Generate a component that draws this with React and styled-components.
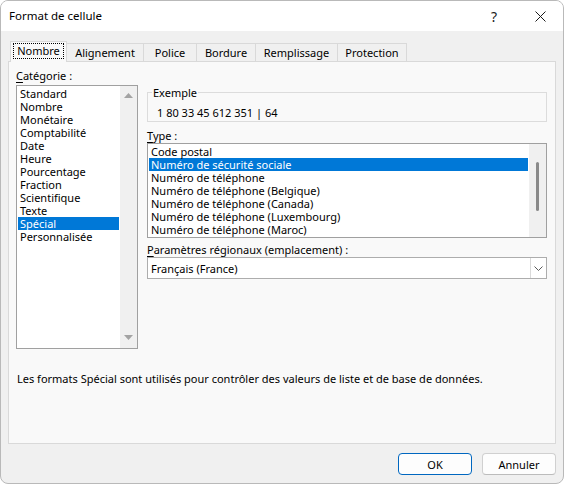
import React from "react";
import styled, { createGlobalStyle } from "styled-components";

const GlobalStyle = createGlobalStyle`
  html, body {
    margin: 0;
    padding: 0;
    background: #ffffff;
  }
  body {
    font-family: "Noto Sans", "Open Sans", sans-serif;
    font-size: 11px;
    color: #000000;
  }
  * {
    box-sizing: border-box;
  }
`;

const tabs = [
  { label: "Nombre", width: 57 },
  { label: "Alignement", width: 78 },
  { label: "Police", width: 54 },
  { label: "Bordure", width: 60 },
  { label: "Remplissage", width: 83 },
  { label: "Protection", width: 70 },
];

const categories = [
  "Standard",
  "Nombre",
  "Monétaire",
  "Comptabilité",
  "Date",
  "Heure",
  "Pourcentage",
  "Fraction",
  "Scientifique",
  "Texte",
  "Spécial",
  "Personnalisée",
];

const types = [
  "Code postal",
  "Numéro de sécurité sociale",
  "Numéro de téléphone",
  "Numéro de téléphone (Belgique)",
  "Numéro de téléphone (Canada)",
  "Numéro de téléphone (Luxembourg)",
  "Numéro de téléphone (Maroc)",
];

function App() {
  return (
    <>
      <GlobalStyle />
      <Window>
        <TitleBar>
          <Title>Format de cellule</Title>
          <CaptionButton>?</CaptionButton>
          <CaptionButton>
            <svg width="11" height="11" viewBox="0 0 11 11">
              <path d="M0.5 0.5 L10.5 10.5 M10.5 0.5 L0.5 10.5" stroke="#1a1a1a" strokeWidth="1" fill="none" />
            </svg>
          </CaptionButton>
        </TitleBar>

        <Body>
          <TabRow>
            {tabs.map((t, i) => (
              <Tab key={t.label} width={t.width} $active={i === 0}>
                {i === 0 ? <FocusLabel>{t.label}</FocusLabel> : t.label}
              </Tab>
            ))}
          </TabRow>

          <Panel>
            <Columns>
              <LeftColumn>
                <Label>
                  <u>C</u>atégorie :
                </Label>
                <ListBox $height={264}>
                  <ListItems>
                    {categories.map((c) => (
                      <Row key={c} $selected={c === "Spécial"}>
                        {c}
                      </Row>
                    ))}
                  </ListItems>
                  <ArrowTrack>
                    <svg width="9" height="5" viewBox="0 0 9 5">
                      <polygon points="0,5 4.5,0 9,5" fill="#a3a3a3" />
                    </svg>
                    <svg width="9" height="5" viewBox="0 0 9 5">
                      <polygon points="0,0 9,0 4.5,5" fill="#a3a3a3" />
                    </svg>
                  </ArrowTrack>
                </ListBox>
              </LeftColumn>

              <RightColumn>
                <Group>
                  <Legend>Exemple</Legend>
                  <SampleValue>1 80 33 45 612 351 | 64</SampleValue>
                </Group>

                <Label $top={6}>
                  <u>T</u>ype :
                </Label>
                <ListBox $height={95}>
                  <ListItems>
                    {types.map((t) => (
                      <Row key={t} $selected={t === "Numéro de sécurité sociale"}>
                        {t}
                      </Row>
                    ))}
                  </ListItems>
                  <ThinTrack>
                    <Thumb />
                  </ThinTrack>
                </ListBox>

                <Label $top={4}>
                  <u>P</u>aramètres régionaux (emplacement) :
                </Label>
                <Select>
                  <SelectValue>Français (France)</SelectValue>
                  <DropButton>
                    <svg width="9" height="5" viewBox="0 0 9 5">
                      <path d="M0.5 0.5 L4.5 4.5 L8.5 0.5" stroke="#5a5a5a" strokeWidth="1" fill="none" />
                    </svg>
                  </DropButton>
                </Select>
              </RightColumn>
            </Columns>

            <Description>
              Les formats Spécial sont utilisés pour contrôler des valeurs de liste et de base de données.
            </Description>
          </Panel>

          <Footer>
            <Button $primary>OK</Button>
            <Button>Annuler</Button>
          </Footer>
        </Body>
      </Window>
    </>
  );
}

export default App;

const Window = styled.div`
  width: 564px;
  height: 484px;
  border: 1px solid #b9b9b9;
  border-radius: 8px;
  overflow: hidden;
  display: flex;
  flex-direction: column;
  background: #f0f0f0;
`;

const TitleBar = styled.div`
  height: 30px;
  background: #ffffff;
  display: flex;
  align-items: center;
  padding-left: 8px;
  flex-shrink: 0;
`;

const Title = styled.div`
  flex: 1;
  font-size: 11.5px;
  padding-bottom: 1px;
`;

const CaptionButton = styled.div`
  width: 46px;
  height: 30px;
  display: flex;
  align-items: center;
  justify-content: center;
  font-size: 14px;
  color: #1a1a1a;
`;

const Body = styled.div`
  flex: 1;
  display: flex;
  flex-direction: column;
  padding: 10px 7px 0 7px;
`;

const TabRow = styled.div`
  height: 20px;
  display: flex;
  align-items: flex-end;
  margin-left: 2px;
`;

const Tab = styled.div`
  width: ${(p) => p.width}px;
  height: ${(p) => (p.$active ? 21 : 18)}px;
  margin-bottom: ${(p) => (p.$active ? -1 : 0)}px;
  margin-left: -1px;
  &:first-child {
    margin-left: 0;
  }
  position: relative;
  z-index: ${(p) => (p.$active ? 2 : 1)};
  background: ${(p) => (p.$active ? "#f9f9f9" : "#f0f0f0")};
  border: 1px solid #d9d9d9;
  border-bottom: none;
  display: flex;
  align-items: center;
  justify-content: center;
  padding-bottom: ${(p) => (p.$active ? 3 : 0)}px;
  line-height: 14px;
`;

const FocusLabel = styled.span`
  border: 1px dotted #000000;
  padding: 0 3px;
  line-height: 14px;
`;

const Panel = styled.div`
  height: 383px;
  background: #f9f9f9;
  border: 1px solid #d9d9d9;
  padding: 6px 8px 0 7px;
`;

const Columns = styled.div`
  display: grid;
  grid-template-columns: 122px 1fr;
  column-gap: 9px;
`;

const LeftColumn = styled.div`
  display: flex;
  flex-direction: column;
`;

const RightColumn = styled.div`
  display: flex;
  flex-direction: column;
  padding-top: 18px;
`;

const Label = styled.div`
  line-height: 15px;
  margin-top: ${(p) => p.$top || 0}px;
  margin-bottom: ${(p) => (p.$top === undefined ? 2 : 0)}px;
  u {
    text-decoration: underline;
    text-underline-offset: 2px;
  }
`;

const ListBox = styled.div`
  height: ${(p) => p.$height}px;
  background: #ffffff;
  border: 1px solid #a0a0a0;
  display: flex;
  overflow: hidden;
`;

const ListItems = styled.div`
  flex: 1;
  padding: 1px;
`;

const Row = styled.div`
  height: 13px;
  line-height: 13px;
  padding-left: 2px;
  white-space: nowrap;
  background: ${(p) => (p.$selected ? "#0078d7" : "transparent")};
  color: ${(p) => (p.$selected ? "#ffffff" : "#000000")};
`;

const ArrowTrack = styled.div`
  width: 17px;
  background: #f0f0f0;
  display: flex;
  flex-direction: column;
  align-items: center;
  justify-content: space-between;
  padding: 7px 0 8px;
`;

const ThinTrack = styled.div`
  width: 17px;
  background: #f0f0f0;
  display: flex;
  flex-direction: column;
  align-items: center;
`;

const Thumb = styled.div`
  width: 3px;
  height: 49px;
  margin-top: 18px;
  border-radius: 2px;
  background: #8a8a8a;
`;

const Group = styled.fieldset`
  margin: 0;
  padding: 0 4px 2px;
  border: 1px solid #dcdcdc;
  min-width: 0;
`;

const Legend = styled.legend`
  padding: 0 1px;
  line-height: 13px;
`;

const SampleValue = styled.div`
  margin: 7px 0 0 5px;
  line-height: 13px;
`;

const Select = styled.div`
  height: 22px;
  background: #ffffff;
  border: 1px solid #adadad;
  display: flex;
  align-items: stretch;
`;

const SelectValue = styled.div`
  flex: 1;
  padding-left: 3px;
  display: flex;
  align-items: center;
`;

const DropButton = styled.div`
  width: 16px;
  border-left: 1px solid #dadada;
  display: flex;
  align-items: center;
  justify-content: center;
`;

const Description = styled.div`
  margin-top: 22px;
  margin-left: 1px;
  line-height: 15px;
`;

const Footer = styled.div`
  display: flex;
  justify-content: flex-end;
  gap: 10px;
  padding-top: 9px;
`;

const Button = styled.div`
  width: 74px;
  height: 22px;
  border-radius: 4px;
  background: #fdfdfd;
  border: 1px solid ${(p) => (p.$primary ? "#0067c0" : "#d0d0d0")};
  border-bottom-color: ${(p) => (p.$primary ? "#0067c0" : "#bcbcbc")};
  display: flex;
  align-items: center;
  justify-content: center;
`;
